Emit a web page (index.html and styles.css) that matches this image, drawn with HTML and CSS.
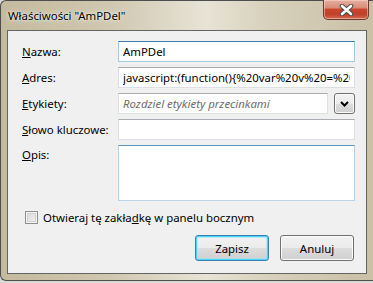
FILE: index.html
```html
<!DOCTYPE html>
<html lang="pl">
<head>
  <meta charset="UTF-8" />
  <title>Właściwości "AmPDel"</title>
  <link rel="stylesheet" href="styles.css">
</head>
<body>

<div class="window">
  <div class="titlebar">
    <span class="title">Właściwości "AmPDel"</span>
    <button class="close">
      <svg width="15" height="12" viewBox="0 0 15 12">
        <path d="M3 2 L12 10 M12 2 L3 10" stroke="#4a4a4a" stroke-width="4.6" stroke-linecap="round" fill="none"/>
        <path d="M3 2 L12 10 M12 2 L3 10" stroke="#ffffff" stroke-width="2.6" stroke-linecap="round" fill="none"/>
      </svg>
    </button>
  </div>

  <div class="client">
    <div class="form">
      <label class="lbl"><u>N</u>azwa:</label>
      <input class="field focused" type="text" value="AmPDel">

      <label class="lbl"><u>A</u>dres:</label>
      <input class="field" type="text" value="javascript:(function(){%20var%20v%20=%20%22http://example.org/%22;%20})()">

      <label class="lbl"><u>E</u>tykiety:</label>
      <div class="tags">
        <input class="field" type="text" placeholder="Rozdziel etykiety przecinkami">
        <button class="drop">
          <svg width="9" height="6" viewBox="0 0 9 6"><path d="M1 1 L4.5 4.5 L8 1" stroke="#000" stroke-width="2" fill="none"/></svg>
        </button>
      </div>

      <label class="lbl"><u>S</u>łowo kluczowe:</label>
      <input class="field" type="text">

      <label class="lbl top"><u>O</u>pis:</label>
      <textarea class="field hover"></textarea>
    </div>

    <label class="check"><span class="box"></span><span>Otwieraj tę zakła<u>d</u>kę w panelu bocznym</span></label>

    <div class="buttons">
      <button class="btn default">Zapisz</button>
      <button class="btn">Anuluj</button>
    </div>
  </div>
</div>

</body>
</html>
```

FILE: styles.css
```css
html, body { margin: 0; padding: 0; }
body { width: 373px; height: 283px; overflow: hidden; background: #d9d9d6; font-family: "Noto Sans", "Open Sans", sans-serif; font-size: 11.4px; color: #000; }

.window { width: 372px; height: 279px; border: 1px solid #4e4e4e; border-right: none; border-radius: 6px 0 0 6px; background: linear-gradient(90deg, #c4ba9e 0%, #d0c8b0 30%, #e7e3d6 55%, #d7d0bb 72%, #c9c0a5 100%); display: flex; flex-direction: column; }

.titlebar { height: 29px; display: flex; justify-content: space-between; align-items: flex-start; }
.title { line-height: 29px; padding-left: 7px; text-shadow: 0 0 6px rgba(255,255,255,0.9), 0 0 2px rgba(255,255,255,0.9); }
.close { width: 46px; height: 20px; margin: -1px 4px 0 0; padding: 0; border: 1px solid #6b3b32; border-top: none; border-radius: 0 0 5px 5px; background: linear-gradient(#e6b0a2 0%, #d98d79 40%, #c9462d 50%, #c04029 75%, #d66a52 100%); box-shadow: inset 0 0 0 1px rgba(255,220,210,0.5); display: flex; align-items: center; justify-content: center; }

.client { height: 242px; margin: 0 6px 6px 6px; border: 1px solid #646464; background: #f0f0f0; }

.form { display: grid; grid-template-columns: 96px 237px; row-gap: 5px; padding: 10px 11px 0 14px; }
.lbl { align-self: center; white-space: nowrap; }
.lbl.top { align-self: start; padding-top: 2px; }

.field { box-sizing: border-box; height: 21px; width: 100%; margin: 0; padding: 0 4px; border: 1px solid #dbdfe6; border-top-color: #abadb3; background: #fff; font-family: inherit; font-size: 11.4px; color: #000; outline: none; }
.field::placeholder { color: #6d6d6d; font-style: italic; }
.field.focused { border-color: #a4c9e3; border-top-color: #3d7bad; }
textarea.field { height: 56px; resize: none; }
.field.hover { border-color: #b7d5ea; border-top-color: #5794bf; }

.tags { display: flex; gap: 6px; }
.tags .field { width: 210px; }
.drop { box-sizing: border-box; width: 21px; height: 21px; margin: 0; padding: 0; border: 1px solid #707070; border-radius: 3px; background: linear-gradient(#f2f2f2 0%, #ebebeb 50%, #dddddd 50%, #cfcfcf 100%); box-shadow: inset 0 0 0 1px #fbfbfb; display: flex; align-items: center; justify-content: center; }

.check { display: flex; align-items: center; gap: 5px; margin: 10px 0 0 17px; height: 13px; white-space: nowrap; }
.box { box-sizing: border-box; width: 13px; height: 13px; border: 1px solid #8e8f8f; background: linear-gradient(135deg, #d6d6d6, #f4f4f4); box-shadow: inset 0 0 0 1px #f4f4f4, inset 0 0 0 2px #d2d2d2; }

.buttons { display: flex; justify-content: flex-end; gap: 11px; margin-top: 11px; padding-right: 12px; }
.btn { box-sizing: border-box; width: 74px; height: 26px; margin: 0; padding: 0; border: 1px solid #707070; border-radius: 3px; background: linear-gradient(#f2f2f2 0%, #ebebeb 50%, #dddddd 50%, #cfcfcf 100%); box-shadow: inset 0 0 0 1px #fcfcfc; font-family: inherit; font-size: 11.4px; color: #000; }
.btn.default { border-color: #3c7fb1; box-shadow: inset 0 0 0 1px #48d4fd, inset 0 0 0 2px rgba(160,225,250,0.6); }
```
